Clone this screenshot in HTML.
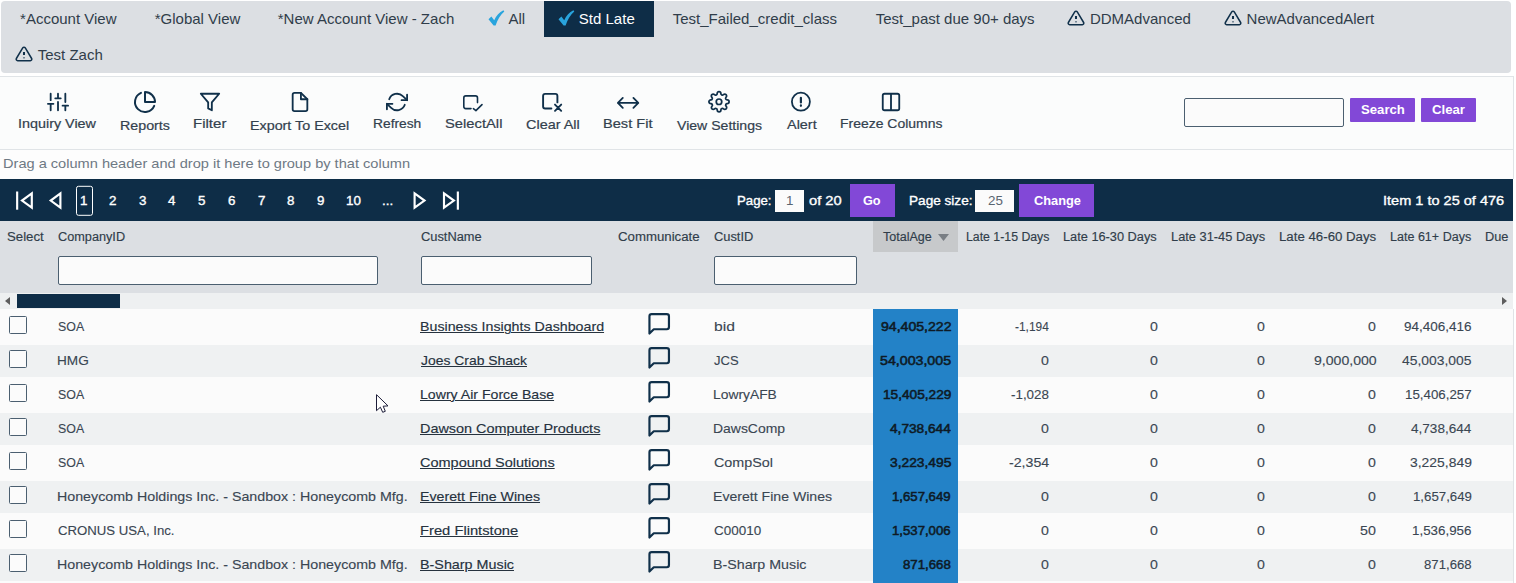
<!DOCTYPE html>
<html>
<head>
<meta charset="utf-8">
<title>Inquiry</title>
<style>
*{box-sizing:border-box;margin:0;padding:0}
html,body{width:1516px;height:583px;overflow:hidden;background:#fff;font-family:"Liberation Sans",sans-serif}
body{position:relative}
.b{position:absolute}
.t{position:absolute;white-space:pre;line-height:1;display:block;transform-origin:0 0}
svg{position:absolute;overflow:visible}
.ic{fill:none;stroke:#10304a;stroke-width:2;stroke-linecap:butt;stroke-linejoin:round}
.inp{position:absolute;background:#fbfbfb;border:1px solid #4b5f70;border-radius:2px}
.btn{position:absolute;background:#8248d7;border-radius:1px}
.cb{position:absolute;left:9px;width:18px;height:18px;background:#fbfbfb;border:1px solid #4b5f70;border-radius:1.5px}
.alt{position:absolute;left:0;width:1513px;height:32px;background:#eff1f2}
</style>
</head>
<body>
<!-- tab strip -->
<div class="b" style="left:1px;top:1px;width:1510px;height:72px;background:#dcdfe3;border-radius:4px"></div>
<div class="b" style="left:544px;top:1px;width:110px;height:36px;background:#0e2d47"></div>
<svg style="left:487.5px;top:10px" width="17" height="16" viewBox="0 0 17 16"><path d="M0.5 9.2 L3.4 6.6 L6.2 10.3 C8.2 5.6 11.4 2.2 15.4 0.2 L16.3 1.6 C12.4 5 9.6 9.8 7.6 15.6 L5.6 15.6 Z" fill="#29a4dd"/></svg>
<svg style="left:557.5px;top:10px" width="17" height="16" viewBox="0 0 17 16"><path d="M0.5 9.2 L3.4 6.6 L6.2 10.3 C8.2 5.6 11.4 2.2 15.4 0.2 L16.3 1.6 C12.4 5 9.6 9.8 7.6 15.6 L5.6 15.6 Z" fill="#29a4dd"/></svg>
<svg class="ic" style="left:1066.6px;top:9.4px" width="18" height="18" viewBox="0 0 24 24" stroke-width="2.2"><path d="M10.29 3.86L1.82 18a2 2 0 0 0 1.71 3h16.94a2 2 0 0 0 1.71-3L13.71 3.86a2 2 0 0 0-3.42 0z"/><path d="M12 9.2v4M12 16.6v1" stroke-width="2.7"/></svg>
<svg class="ic" style="left:1223.8px;top:9.4px" width="18" height="18" viewBox="0 0 24 24" stroke-width="2.2"><path d="M10.29 3.86L1.82 18a2 2 0 0 0 1.71 3h16.94a2 2 0 0 0 1.71-3L13.71 3.86a2 2 0 0 0-3.42 0z"/><path d="M12 9.2v4M12 16.6v1" stroke-width="2.7"/></svg>
<svg class="ic" style="left:14.8px;top:45.4px" width="18" height="18" viewBox="0 0 24 24" stroke-width="2.2"><path d="M10.29 3.86L1.82 18a2 2 0 0 0 1.71 3h16.94a2 2 0 0 0 1.71-3L13.71 3.86a2 2 0 0 0-3.42 0z"/><path d="M12 9.2v4M12 16.6v1" stroke-width="2.7"/></svg>

<!-- toolbar -->
<div class="b" style="left:0;top:76px;width:1514px;height:74px;background:#fbfcfc;border:1px solid #e0e4e7;border-left:none"></div>
<svg class="ic" style="left:0;top:76px;stroke-linecap:round" width="1000" height="74" viewBox="0 76 1000 74"><g transform="translate(47,91) scale(0.9167)" stroke-width="2"><path d="M4 21v-7M4 10V3M12 21v-9M12 8V3M20 21v-5M20 12V3M1 14h6M9 8h6M17 16h6"/></g><g transform="translate(133,90) scale(1.0000)" stroke-width="2"><path d="M21.21 15.89A10 10 0 1 1 8 2.83"/><path d="M22 12A10 10 0 0 0 12 2v10z"/></g><g transform="translate(199,91) scale(0.9167)" stroke-width="2"><path d="M22 3H2l8 9.46V19l4 2v-8.54L22 3z"/></g><g transform="translate(289,91) scale(0.9167)" stroke-width="2"><path d="M13 2H6a2 2 0 0 0-2 2v16a2 2 0 0 0 2 2h12a2 2 0 0 0 2-2V9z"/><path d="M13 2v7h7"/></g><g transform="translate(386,91) scale(0.9167)" stroke-width="2"><path d="M23 4v6h-6"/><path d="M1 20v-6h6"/><path d="M3.51 9a9 9 0 0 1 14.85-3.36L23 10M1 14l4.64 4.36A9 9 0 0 0 20.49 15"/></g><g stroke-width="1.6"><path d="M471 108.6H465.8a2 2 0 0 1-2-2V97.9a2 2 0 0 1 2-2h9.7a2 2 0 0 1 2 2V102.6"/><path d="M473.4 108.7l2.5 1.9 6.1-6"/></g><g stroke-width="1.9"><path d="M551.4 108.5H545.1a2 2 0 0 1-2-2V95.9a2 2 0 0 1 2-2h10.3a2 2 0 0 1 2 2V102.4"/><path d="M555 104.6l6.2 6.2M561.2 104.6l-6.2 6.2"/></g><g stroke-width="1.8"><path d="M617.9 102.9H638.3M622.8 97.9l-4.9 5 4.9 5M633.4 97.9l4.9 5-4.9 5"/></g><g transform="translate(708,90.75) scale(0.9167)" stroke-width="1.9"><circle cx="12" cy="12" r="3"/><path d="M19.4 15a1.65 1.65 0 0 0 .33 1.82l.06.06a2 2 0 0 1 0 2.83 2 2 0 0 1-2.83 0l-.06-.06a1.65 1.65 0 0 0-1.82-.33 1.65 1.65 0 0 0-1 1.51V21a2 2 0 0 1-2 2 2 2 0 0 1-2-2v-.09A1.65 1.65 0 0 0 9 19.4a1.65 1.65 0 0 0-1.82.33l-.06.06a2 2 0 0 1-2.83 0 2 2 0 0 1 0-2.83l.06-.06a1.65 1.65 0 0 0 .33-1.82 1.65 1.65 0 0 0-1.51-1H3a2 2 0 0 1-2-2 2 2 0 0 1 2-2h.09A1.65 1.65 0 0 0 4.6 9a1.65 1.65 0 0 0-.33-1.82l-.06-.06a2 2 0 0 1 0-2.83 2 2 0 0 1 2.83 0l.06.06a1.65 1.65 0 0 0 1.82.33H9a1.65 1.65 0 0 0 1-1.51V3a2 2 0 0 1 2-2 2 2 0 0 1 2 2v.09a1.65 1.65 0 0 0 1 1.51 1.65 1.65 0 0 0 1.82-.33l.06-.06a2 2 0 0 1 2.83 0 2 2 0 0 1 0 2.83l-.06.06a1.65 1.65 0 0 0-.33 1.82V9a1.65 1.65 0 0 0 1.51 1H21a2 2 0 0 1 2 2 2 2 0 0 1-2 2h-.09a1.65 1.65 0 0 0-1.51 1z"/></g><g stroke-width="1.8"><circle cx="800.9" cy="101.7" r="9"/><path d="M800.9 97.8v4.6M800.9 105.4v0.4" stroke-width="2.2"/></g><g transform="translate(880,91) scale(0.9167)" stroke-width="2"><path d="M12 3h7a2 2 0 0 1 2 2v14a2 2 0 0 1-2 2h-7m0-18H5a2 2 0 0 0-2 2v14a2 2 0 0 0 2 2h7m0-18v18"/></g></svg>
<div class="inp" style="left:1184px;top:98px;width:160px;height:29px"></div>
<div class="btn" style="left:1350px;top:98px;width:65px;height:24px"></div>
<div class="btn" style="left:1421px;top:98px;width:55px;height:24px"></div>

<!-- group panel -->
<div class="b" style="left:0;top:150px;width:1513px;height:29px;background:#fdfdfd"></div>

<!-- pager -->
<div class="b" style="left:0;top:179px;width:1513px;height:42px;background:#0e2d47"></div>
<svg style="left:0;top:179px" width="480" height="42" viewBox="0 0 480 42" fill="none" stroke="#fff" stroke-width="2.15" stroke-linejoin="miter">
<path d="M17.15 12.5v18.2"/><path d="M31.8 14.47v14.26L22 21.6z"/>
<path d="M60.4 14.47v14.26L50.7 21.6z"/>
<path d="M414.6 14.47v14.26L424.5 21.6z"/>
<path d="M444 14.47v14.26L453.9 21.6z"/><path d="M457.85 12.5v18.2"/>
<rect x="76.5" y="7.3" width="16" height="29" rx="2" stroke-width="1"/>
</svg>
<div class="b" style="left:775px;top:190px;width:29px;height:22px;background:#fbfbfb"></div>
<div class="btn" style="left:850px;top:184px;width:45px;height:33px;border-radius:0"></div>
<div class="b" style="left:975px;top:190px;width:39px;height:22px;background:#fbfbfb"></div>
<div class="btn" style="left:1019px;top:184px;width:75px;height:33px;border-radius:0"></div>

<!-- header -->
<div class="b" style="left:0;top:221px;width:1513px;height:72px;background:#dcdfe3"></div>
<div class="b" style="left:873px;top:221px;width:85px;height:31px;background:#c7c9cb"></div>
<svg style="left:937.5px;top:233.6px" width="11" height="7" viewBox="0 0 11 7"><path d="M0 0h11L5.5 7z" fill="#797e84"/></svg>
<div class="inp" style="left:58px;top:256px;width:320px;height:29px"></div>
<div class="inp" style="left:421px;top:256px;width:171px;height:29px"></div>
<div class="inp" style="left:714px;top:256px;width:143px;height:29px"></div>

<!-- horizontal scrollbar -->
<div class="b" style="left:0;top:293px;width:1513px;height:16px;background:#eef0f1"></div>
<div class="b" style="left:17px;top:294px;width:103px;height:14px;background:#0e2d47"></div>
<svg style="left:4.5px;top:296.5px" width="5" height="8" viewBox="0 0 5 8"><path d="M5 0v8L0 4z" fill="#5e5e5e"/></svg>
<svg style="left:1502px;top:296.5px" width="5" height="8" viewBox="0 0 5 8"><path d="M0 0v8L5 4z" fill="#5e5e5e"/></svg>

<!-- rows -->
<div class="b" style="left:0;top:309px;width:1513px;height:274px;background:#fbfbfb"></div>
<div class="alt" style="top:345px"></div>
<div class="alt" style="top:413px"></div>
<div class="alt" style="top:481px"></div>
<div class="alt" style="top:549px"></div>
<div class="cb" style="top:316px"></div>
<div class="cb" style="top:350px"></div>
<div class="cb" style="top:384px"></div>
<div class="cb" style="top:418px"></div>
<div class="cb" style="top:452px"></div>
<div class="cb" style="top:486px"></div>
<div class="cb" style="top:520px"></div>
<div class="cb" style="top:554px"></div>
<svg class="ic" style="left:0;top:300px" width="800" height="283" viewBox="0 300 800 283"><g transform="translate(646.2,310.8) scale(1.0833)" stroke-width="2"><path d="M21 15a2 2 0 0 1-2 2H7l-4 4V5a2 2 0 0 1 2-2h14a2 2 0 0 1 2 2z"/></g><g transform="translate(646.2,344.8) scale(1.0833)" stroke-width="2"><path d="M21 15a2 2 0 0 1-2 2H7l-4 4V5a2 2 0 0 1 2-2h14a2 2 0 0 1 2 2z"/></g><g transform="translate(646.2,378.8) scale(1.0833)" stroke-width="2"><path d="M21 15a2 2 0 0 1-2 2H7l-4 4V5a2 2 0 0 1 2-2h14a2 2 0 0 1 2 2z"/></g><g transform="translate(646.2,412.8) scale(1.0833)" stroke-width="2"><path d="M21 15a2 2 0 0 1-2 2H7l-4 4V5a2 2 0 0 1 2-2h14a2 2 0 0 1 2 2z"/></g><g transform="translate(646.2,446.8) scale(1.0833)" stroke-width="2"><path d="M21 15a2 2 0 0 1-2 2H7l-4 4V5a2 2 0 0 1 2-2h14a2 2 0 0 1 2 2z"/></g><g transform="translate(646.2,480.8) scale(1.0833)" stroke-width="2"><path d="M21 15a2 2 0 0 1-2 2H7l-4 4V5a2 2 0 0 1 2-2h14a2 2 0 0 1 2 2z"/></g><g transform="translate(646.2,514.8) scale(1.0833)" stroke-width="2"><path d="M21 15a2 2 0 0 1-2 2H7l-4 4V5a2 2 0 0 1 2-2h14a2 2 0 0 1 2 2z"/></g><g transform="translate(646.2,548.8) scale(1.0833)" stroke-width="2"><path d="M21 15a2 2 0 0 1-2 2H7l-4 4V5a2 2 0 0 1 2-2h14a2 2 0 0 1 2 2z"/></g></svg>
<div class="b" style="left:873px;top:309px;width:85px;height:274px;background:#2382c7"></div>

<div class="b" style="left:1513px;top:150px;width:1px;height:29px;background:#e0e3e6"></div>
<div class="b" style="left:1513px;top:309px;width:1px;height:274px;background:#e0e3e6"></div>
<span class="t" style="left:20.05px;top:11px;font-size:15px;color:#303d4a;">*Account View</span>
<span class="t" style="left:154.75px;top:11px;font-size:15px;color:#303d4a;">*Global View</span>
<span class="t" style="left:277.75px;top:11px;font-size:15px;color:#303d4a;">*New Account View - Zach</span>
<span class="t" style="left:508.40px;top:11px;font-size:15px;color:#303d4a;">All</span>
<span class="t" style="left:578.85px;top:11px;font-size:15px;color:#fff;">Std Late</span>
<span class="t" style="left:672.75px;top:11px;font-size:15px;color:#303d4a;">Test_Failed_credit_class</span>
<span class="t" style="left:875.75px;top:11px;font-size:15px;color:#303d4a;">Test_past due 90+ days</span>
<span class="t" style="left:1089.95px;top:11px;font-size:15px;color:#303d4a;">DDMAdvanced</span>
<span class="t" style="left:1246.55px;top:11px;font-size:15px;color:#303d4a;">NewAdvancedAlert</span>
<span class="t" style="left:37.75px;top:47px;font-size:15px;color:#303d4a;">Test Zach</span>
<span class="t" style="left:18.12px;top:117px;font-size:13px;color:#33414e;transform:scaleX(1.1047);-webkit-text-stroke:0.2px #33414e;">Inquiry View</span>
<span class="t" style="left:119.90px;top:119px;font-size:13px;color:#33414e;transform:scaleX(1.0955);-webkit-text-stroke:0.2px #33414e;">Reports</span>
<span class="t" style="left:193.14px;top:117px;font-size:13px;color:#33414e;transform:scaleX(1.1568);-webkit-text-stroke:0.2px #33414e;">Filter</span>
<span class="t" style="left:250.30px;top:119px;font-size:13px;color:#33414e;transform:scaleX(1.1003);-webkit-text-stroke:0.2px #33414e;">Export To Excel</span>
<span class="t" style="left:372.74px;top:117px;font-size:13px;color:#33414e;transform:scaleX(1.0606);-webkit-text-stroke:0.2px #33414e;">Refresh</span>
<span class="t" style="left:445.13px;top:117px;font-size:13px;color:#33414e;transform:scaleX(1.1350);-webkit-text-stroke:0.2px #33414e;">SelectAll</span>
<span class="t" style="left:525.87px;top:118px;font-size:13px;color:#33414e;transform:scaleX(1.1102);-webkit-text-stroke:0.2px #33414e;">Clear All</span>
<span class="t" style="left:602.58px;top:117px;font-size:13px;color:#33414e;transform:scaleX(1.1233);-webkit-text-stroke:0.2px #33414e;">Best Fit</span>
<span class="t" style="left:677.00px;top:119px;font-size:13px;color:#33414e;transform:scaleX(1.0833);-webkit-text-stroke:0.2px #33414e;">View Settings</span>
<span class="t" style="left:786.60px;top:118px;font-size:13px;color:#33414e;transform:scaleX(1.1103);-webkit-text-stroke:0.2px #33414e;">Alert</span>
<span class="t" style="left:839.93px;top:117px;font-size:13px;color:#33414e;transform:scaleX(1.0745);-webkit-text-stroke:0.2px #33414e;">Freeze Columns</span>
<span class="t" style="left:1360.93px;top:104px;font-size:12px;color:#fff;font-weight:700;transform:scaleX(1.0949);">Search</span>
<span class="t" style="left:1431.85px;top:104px;font-size:12px;color:#fff;font-weight:700;transform:scaleX(1.0983);">Clear</span>
<span class="t" style="left:2.88px;top:157px;font-size:13px;color:#6e7984;transform:scaleX(1.1219);">Drag a column header and drop it here to group by that column</span>
<span class="t" style="left:80.44px;top:194px;font-size:13px;color:#fff;transform:scaleX(1.0300);-webkit-text-stroke:0.35px #fff;">1</span>
<span class="t" style="left:109.39px;top:194px;font-size:13px;color:#fff;transform:scaleX(1.0300);-webkit-text-stroke:0.35px #fff;">2</span>
<span class="t" style="left:138.87px;top:194px;font-size:13px;color:#fff;transform:scaleX(1.0300);-webkit-text-stroke:0.35px #fff;">3</span>
<span class="t" style="left:168.27px;top:194px;font-size:13px;color:#fff;transform:scaleX(1.0300);-webkit-text-stroke:0.35px #fff;">4</span>
<span class="t" style="left:198.37px;top:194px;font-size:13px;color:#fff;transform:scaleX(1.0300);-webkit-text-stroke:0.35px #fff;">5</span>
<span class="t" style="left:227.84px;top:194px;font-size:13px;color:#fff;transform:scaleX(1.0300);-webkit-text-stroke:0.35px #fff;">6</span>
<span class="t" style="left:257.77px;top:194px;font-size:13px;color:#fff;transform:scaleX(1.0300);-webkit-text-stroke:0.35px #fff;">7</span>
<span class="t" style="left:287.27px;top:194px;font-size:13px;color:#fff;transform:scaleX(1.0300);-webkit-text-stroke:0.35px #fff;">8</span>
<span class="t" style="left:317.37px;top:194px;font-size:13px;color:#fff;transform:scaleX(1.0300);-webkit-text-stroke:0.35px #fff;">9</span>
<span class="t" style="left:345.57px;top:194px;font-size:13px;color:#fff;transform:scaleX(1.0300);-webkit-text-stroke:0.35px #fff;">10</span>
<span class="t" style="left:382.13px;top:194px;font-size:13px;color:#fff;transform:scaleX(1.0300);-webkit-text-stroke:0.35px #fff;">...</span>
<span class="t" style="left:736.89px;top:194px;font-size:13px;color:#fff;transform:scaleX(1.0142);-webkit-text-stroke:0.35px #fff;">Page:</span>
<span class="t" style="left:808.64px;top:194px;font-size:13px;color:#fff;transform:scaleX(1.1286);-webkit-text-stroke:0.35px #fff;">of 20</span>
<span class="t" style="left:908.95px;top:194px;font-size:13px;color:#fff;transform:scaleX(1.0462);-webkit-text-stroke:0.35px #fff;">Page size:</span>
<span class="t" style="left:1382.60px;top:194px;font-size:13px;color:#fff;transform:scaleX(1.1174);-webkit-text-stroke:0.35px #fff;">Item 1 to 25 of 476</span>
<span class="t" style="left:863.31px;top:194px;font-size:13px;color:#fff;font-weight:700;transform:scaleX(0.9765);">Go</span>
<span class="t" style="left:1033.51px;top:194px;font-size:13px;color:#fff;font-weight:700;transform:scaleX(0.9840);">Change</span>
<span class="t" style="left:786.14px;top:194px;font-size:13px;color:#5a6570;transform:scaleX(1.0300);">1</span>
<span class="t" style="left:987.53px;top:194px;font-size:13px;color:#5a6570;transform:scaleX(1.0300);">25</span>
<span class="t" style="left:6.85px;top:231px;font-size:12px;color:#303d4a;transform:scaleX(1.1023);-webkit-text-stroke:0.15px #303d4a;">Select</span>
<span class="t" style="left:58.07px;top:231px;font-size:12px;color:#303d4a;transform:scaleX(1.0586);-webkit-text-stroke:0.15px #303d4a;">CompanyID</span>
<span class="t" style="left:421.06px;top:231px;font-size:12px;color:#303d4a;transform:scaleX(1.0709);-webkit-text-stroke:0.15px #303d4a;">CustName</span>
<span class="t" style="left:617.95px;top:231px;font-size:12px;color:#303d4a;transform:scaleX(1.1027);-webkit-text-stroke:0.15px #303d4a;">Communicate</span>
<span class="t" style="left:713.96px;top:231px;font-size:12px;color:#303d4a;transform:scaleX(1.0713);-webkit-text-stroke:0.15px #303d4a;">CustID</span>
<span class="t" style="left:882.74px;top:231px;font-size:12px;color:#303d4a;transform:scaleX(1.0435);-webkit-text-stroke:0.15px #303d4a;">TotalAge</span>
<span class="t" style="left:965.77px;top:231px;font-size:12px;color:#303d4a;transform:scaleX(1.0250);-webkit-text-stroke:0.15px #303d4a;">Late 1-15 Days</span>
<span class="t" style="left:1063.34px;top:231px;font-size:12px;color:#303d4a;transform:scaleX(1.0640);-webkit-text-stroke:0.15px #303d4a;">Late 16-30 Days</span>
<span class="t" style="left:1171.23px;top:231px;font-size:12px;color:#303d4a;transform:scaleX(1.0697);-webkit-text-stroke:0.15px #303d4a;">Late 31-45 Days</span>
<span class="t" style="left:1279.00px;top:231px;font-size:12px;color:#303d4a;transform:scaleX(1.1043);-webkit-text-stroke:0.15px #303d4a;">Late 46-60 Days</span>
<span class="t" style="left:1390.15px;top:231px;font-size:12px;color:#303d4a;transform:scaleX(1.0452);-webkit-text-stroke:0.15px #303d4a;">Late 61+ Days</span>
<span class="t" style="left:1485.44px;top:231px;font-size:12px;color:#303d4a;transform:scaleX(1.0634);-webkit-text-stroke:0.15px #303d4a;">Due</span>
<span class="t" style="left:57.92px;top:320px;font-size:13px;color:#3a4652;transform:scaleX(0.9519);-webkit-text-stroke:0.12px #3a4652;">SOA</span>
<span class="t" style="left:420.11px;top:320px;font-size:13px;color:#26323e;transform:scaleX(1.0931);text-decoration:underline;text-underline-offset:0.5px;text-decoration-thickness:1px;-webkit-text-stroke:0.15px #26323e;">Business Insights Dashboard</span>
<span class="t" style="left:713.60px;top:320px;font-size:13px;color:#3a4652;transform:scaleX(1.2063);-webkit-text-stroke:0.12px #3a4652;">bid</span>
<span class="t" style="left:880.56px;top:320px;font-size:13px;color:#0e1a25;transform:scaleX(1.0844);-webkit-text-stroke:0.55px #0e1a25;">94,405,222</span>
<span class="t" style="left:1015.34px;top:320px;font-size:13px;color:#3a4652;transform:scaleX(0.9167);-webkit-text-stroke:0.12px #3a4652;">-1,194</span>
<span class="t" style="left:1149.56px;top:320px;font-size:13px;color:#3a4652;transform:scaleX(1.0880);-webkit-text-stroke:0.12px #3a4652;">0</span>
<span class="t" style="left:1257.36px;top:320px;font-size:13px;color:#3a4652;transform:scaleX(1.0880);-webkit-text-stroke:0.12px #3a4652;">0</span>
<span class="t" style="left:1368.36px;top:320px;font-size:13px;color:#3a4652;transform:scaleX(1.0880);-webkit-text-stroke:0.12px #3a4652;">0</span>
<span class="t" style="left:1403.88px;top:320px;font-size:13px;color:#3a4652;transform:scaleX(1.0391);-webkit-text-stroke:0.12px #3a4652;">94,406,416</span>
<span class="t" style="left:57.35px;top:354px;font-size:13px;color:#3a4652;transform:scaleX(1.0478);-webkit-text-stroke:0.12px #3a4652;">HMG</span>
<span class="t" style="left:420.93px;top:354px;font-size:13px;color:#26323e;transform:scaleX(1.0704);text-decoration:underline;text-underline-offset:0.5px;text-decoration-thickness:1px;-webkit-text-stroke:0.15px #26323e;">Joes Crab Shack</span>
<span class="t" style="left:714.25px;top:354px;font-size:13px;color:#3a4652;transform:scaleX(1.0021);-webkit-text-stroke:0.12px #3a4652;">JCS</span>
<span class="t" style="left:880.05px;top:354px;font-size:13px;color:#0e1a25;transform:scaleX(1.0922);-webkit-text-stroke:0.55px #0e1a25;">54,003,005</span>
<span class="t" style="left:1041.46px;top:354px;font-size:13px;color:#3a4652;transform:scaleX(1.0880);-webkit-text-stroke:0.12px #3a4652;">0</span>
<span class="t" style="left:1149.56px;top:354px;font-size:13px;color:#3a4652;transform:scaleX(1.0880);-webkit-text-stroke:0.12px #3a4652;">0</span>
<span class="t" style="left:1257.36px;top:354px;font-size:13px;color:#3a4652;transform:scaleX(1.0880);-webkit-text-stroke:0.12px #3a4652;">0</span>
<span class="t" style="left:1313.66px;top:354px;font-size:13px;color:#3a4652;transform:scaleX(1.0837);-webkit-text-stroke:0.12px #3a4652;">9,000,000</span>
<span class="t" style="left:1402.13px;top:354px;font-size:13px;color:#3a4652;transform:scaleX(1.0661);-webkit-text-stroke:0.12px #3a4652;">45,003,005</span>
<span class="t" style="left:57.92px;top:388px;font-size:13px;color:#3a4652;transform:scaleX(0.9519);-webkit-text-stroke:0.12px #3a4652;">SOA</span>
<span class="t" style="left:420.11px;top:388px;font-size:13px;color:#26323e;transform:scaleX(1.0852);text-decoration:underline;text-underline-offset:0.5px;text-decoration-thickness:1px;-webkit-text-stroke:0.15px #26323e;">Lowry Air Force Base</span>
<span class="t" style="left:713.44px;top:388px;font-size:13px;color:#3a4652;transform:scaleX(1.0644);-webkit-text-stroke:0.12px #3a4652;">LowryAFB</span>
<span class="t" style="left:882.75px;top:388px;font-size:13px;color:#0e1a25;transform:scaleX(1.0504);-webkit-text-stroke:0.55px #0e1a25;">15,405,229</span>
<span class="t" style="left:1011.49px;top:388px;font-size:13px;color:#3a4652;transform:scaleX(1.0294);-webkit-text-stroke:0.12px #3a4652;">-1,028</span>
<span class="t" style="left:1149.56px;top:388px;font-size:13px;color:#3a4652;transform:scaleX(1.0880);-webkit-text-stroke:0.12px #3a4652;">0</span>
<span class="t" style="left:1257.36px;top:388px;font-size:13px;color:#3a4652;transform:scaleX(1.0880);-webkit-text-stroke:0.12px #3a4652;">0</span>
<span class="t" style="left:1368.36px;top:388px;font-size:13px;color:#3a4652;transform:scaleX(1.0880);-webkit-text-stroke:0.12px #3a4652;">0</span>
<span class="t" style="left:1404.88px;top:388px;font-size:13px;color:#3a4652;transform:scaleX(1.0236);-webkit-text-stroke:0.12px #3a4652;">15,406,257</span>
<span class="t" style="left:57.92px;top:422px;font-size:13px;color:#3a4652;transform:scaleX(0.9519);-webkit-text-stroke:0.12px #3a4652;">SOA</span>
<span class="t" style="left:420.09px;top:422px;font-size:13px;color:#26323e;transform:scaleX(1.1093);text-decoration:underline;text-underline-offset:0.5px;text-decoration-thickness:1px;-webkit-text-stroke:0.15px #26323e;">Dawson Computer Products</span>
<span class="t" style="left:713.43px;top:422px;font-size:13px;color:#3a4652;transform:scaleX(1.0722);-webkit-text-stroke:0.12px #3a4652;">DawsComp</span>
<span class="t" style="left:890.04px;top:422px;font-size:13px;color:#0e1a25;transform:scaleX(1.0515);-webkit-text-stroke:0.55px #0e1a25;">4,738,644</span>
<span class="t" style="left:1041.46px;top:422px;font-size:13px;color:#3a4652;transform:scaleX(1.0880);-webkit-text-stroke:0.12px #3a4652;">0</span>
<span class="t" style="left:1149.56px;top:422px;font-size:13px;color:#3a4652;transform:scaleX(1.0880);-webkit-text-stroke:0.12px #3a4652;">0</span>
<span class="t" style="left:1257.36px;top:422px;font-size:13px;color:#3a4652;transform:scaleX(1.0880);-webkit-text-stroke:0.12px #3a4652;">0</span>
<span class="t" style="left:1368.36px;top:422px;font-size:13px;color:#3a4652;transform:scaleX(1.0880);-webkit-text-stroke:0.12px #3a4652;">0</span>
<span class="t" style="left:1410.94px;top:422px;font-size:13px;color:#3a4652;transform:scaleX(1.0428);-webkit-text-stroke:0.12px #3a4652;">4,738,644</span>
<span class="t" style="left:57.92px;top:456px;font-size:13px;color:#3a4652;transform:scaleX(0.9519);-webkit-text-stroke:0.12px #3a4652;">SOA</span>
<span class="t" style="left:420.36px;top:456px;font-size:13px;color:#26323e;transform:scaleX(1.1155);text-decoration:underline;text-underline-offset:0.5px;text-decoration-thickness:1px;-webkit-text-stroke:0.15px #26323e;">Compound Solutions</span>
<span class="t" style="left:713.67px;top:456px;font-size:13px;color:#3a4652;transform:scaleX(1.1034);-webkit-text-stroke:0.12px #3a4652;">CompSol</span>
<span class="t" style="left:889.77px;top:456px;font-size:13px;color:#0e1a25;transform:scaleX(1.0608);-webkit-text-stroke:0.55px #0e1a25;">3,223,495</span>
<span class="t" style="left:1008.95px;top:456px;font-size:13px;color:#3a4652;transform:scaleX(1.0917);-webkit-text-stroke:0.12px #3a4652;">-2,354</span>
<span class="t" style="left:1149.56px;top:456px;font-size:13px;color:#3a4652;transform:scaleX(1.0880);-webkit-text-stroke:0.12px #3a4652;">0</span>
<span class="t" style="left:1257.36px;top:456px;font-size:13px;color:#3a4652;transform:scaleX(1.0880);-webkit-text-stroke:0.12px #3a4652;">0</span>
<span class="t" style="left:1368.36px;top:456px;font-size:13px;color:#3a4652;transform:scaleX(1.0880);-webkit-text-stroke:0.12px #3a4652;">0</span>
<span class="t" style="left:1409.67px;top:456px;font-size:13px;color:#3a4652;transform:scaleX(1.0696);-webkit-text-stroke:0.12px #3a4652;">3,225,849</span>
<span class="t" style="left:57.30px;top:490px;font-size:13px;color:#3a4652;transform:scaleX(1.0953);-webkit-text-stroke:0.12px #3a4652;">Honeycomb Holdings Inc. - Sandbox : Honeycomb Mfg.</span>
<span class="t" style="left:420.11px;top:490px;font-size:13px;color:#26323e;transform:scaleX(1.0928);text-decoration:underline;text-underline-offset:0.5px;text-decoration-thickness:1px;-webkit-text-stroke:0.15px #26323e;">Everett Fine Wines</span>
<span class="t" style="left:713.42px;top:490px;font-size:13px;color:#3a4652;transform:scaleX(1.0845);-webkit-text-stroke:0.12px #3a4652;">Everett Fine Wines</span>
<span class="t" style="left:892.49px;top:490px;font-size:13px;color:#0e1a25;transform:scaleX(1.0133);-webkit-text-stroke:0.55px #0e1a25;">1,657,649</span>
<span class="t" style="left:1041.46px;top:490px;font-size:13px;color:#3a4652;transform:scaleX(1.0880);-webkit-text-stroke:0.12px #3a4652;">0</span>
<span class="t" style="left:1149.56px;top:490px;font-size:13px;color:#3a4652;transform:scaleX(1.0880);-webkit-text-stroke:0.12px #3a4652;">0</span>
<span class="t" style="left:1257.36px;top:490px;font-size:13px;color:#3a4652;transform:scaleX(1.0880);-webkit-text-stroke:0.12px #3a4652;">0</span>
<span class="t" style="left:1368.36px;top:490px;font-size:13px;color:#3a4652;transform:scaleX(1.0880);-webkit-text-stroke:0.12px #3a4652;">0</span>
<span class="t" style="left:1412.58px;top:490px;font-size:13px;color:#3a4652;transform:scaleX(1.0187);-webkit-text-stroke:0.12px #3a4652;">1,657,649</span>
<span class="t" style="left:57.64px;top:524px;font-size:13px;color:#3a4652;transform:scaleX(1.0142);-webkit-text-stroke:0.12px #3a4652;">CRONUS USA, Inc.</span>
<span class="t" style="left:420.07px;top:524px;font-size:13px;color:#26323e;transform:scaleX(1.1331);text-decoration:underline;text-underline-offset:0.5px;text-decoration-thickness:1px;-webkit-text-stroke:0.15px #26323e;">Fred Flintstone</span>
<span class="t" style="left:713.72px;top:524px;font-size:13px;color:#3a4652;transform:scaleX(1.0350);-webkit-text-stroke:0.12px #3a4652;">C00010</span>
<span class="t" style="left:892.49px;top:524px;font-size:13px;color:#0e1a25;transform:scaleX(1.0133);-webkit-text-stroke:0.55px #0e1a25;">1,537,006</span>
<span class="t" style="left:1041.46px;top:524px;font-size:13px;color:#3a4652;transform:scaleX(1.0880);-webkit-text-stroke:0.12px #3a4652;">0</span>
<span class="t" style="left:1149.56px;top:524px;font-size:13px;color:#3a4652;transform:scaleX(1.0880);-webkit-text-stroke:0.12px #3a4652;">0</span>
<span class="t" style="left:1257.36px;top:524px;font-size:13px;color:#3a4652;transform:scaleX(1.0880);-webkit-text-stroke:0.12px #3a4652;">0</span>
<span class="t" style="left:1360.35px;top:524px;font-size:13px;color:#3a4652;transform:scaleX(1.0963);-webkit-text-stroke:0.12px #3a4652;">50</span>
<span class="t" style="left:1412.07px;top:524px;font-size:13px;color:#3a4652;transform:scaleX(1.0276);-webkit-text-stroke:0.12px #3a4652;">1,536,956</span>
<span class="t" style="left:57.30px;top:558px;font-size:13px;color:#3a4652;transform:scaleX(1.0953);-webkit-text-stroke:0.12px #3a4652;">Honeycomb Holdings Inc. - Sandbox : Honeycomb Mfg.</span>
<span class="t" style="left:420.10px;top:558px;font-size:13px;color:#26323e;transform:scaleX(1.1024);text-decoration:underline;text-underline-offset:0.5px;text-decoration-thickness:1px;-webkit-text-stroke:0.15px #26323e;">B-Sharp Music</span>
<span class="t" style="left:713.40px;top:558px;font-size:13px;color:#3a4652;transform:scaleX(1.0964);-webkit-text-stroke:0.12px #3a4652;">B-Sharp Music</span>
<span class="t" style="left:903.19px;top:558px;font-size:13px;color:#0e1a25;transform:scaleX(1.0174);-webkit-text-stroke:0.55px #0e1a25;">871,668</span>
<span class="t" style="left:1041.46px;top:558px;font-size:13px;color:#3a4652;transform:scaleX(1.0880);-webkit-text-stroke:0.12px #3a4652;">0</span>
<span class="t" style="left:1149.56px;top:558px;font-size:13px;color:#3a4652;transform:scaleX(1.0880);-webkit-text-stroke:0.12px #3a4652;">0</span>
<span class="t" style="left:1257.36px;top:558px;font-size:13px;color:#3a4652;transform:scaleX(1.0880);-webkit-text-stroke:0.12px #3a4652;">0</span>
<span class="t" style="left:1368.36px;top:558px;font-size:13px;color:#3a4652;transform:scaleX(1.0880);-webkit-text-stroke:0.12px #3a4652;">0</span>
<span class="t" style="left:1423.79px;top:558px;font-size:13px;color:#3a4652;transform:scaleX(1.0130);-webkit-text-stroke:0.12px #3a4652;">871,668</span>

<!-- mouse cursor -->
<svg style="left:376px;top:394px" width="13" height="21" viewBox="0 0 13 21"><path d="M0.5 0.7V16.7L4.4 13.2 6.7 18.3 9.3 17.3 7.2 12.2 12 11.9z" fill="#fff" stroke="#1c1c38" stroke-width="1"/></svg>
</body>
</html>
